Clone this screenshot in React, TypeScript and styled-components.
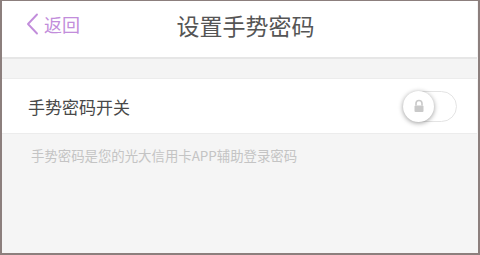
import React, { useState } from 'react';
import styled, { createGlobalStyle } from 'styled-components';

const GlobalStyle = createGlobalStyle`
  html, body {
    margin: 0;
    padding: 0;
    background: #ffffff;
  }
  body {
    font-family: "Noto Sans CJK SC", "Noto Sans", sans-serif;
  }
`;

const Frame = styled.div`
  box-sizing: border-box;
  width: 480px;
  height: 255px;
  border: 2px solid #8c7f7d;
  border-top-width: 1px;
  display: flex;
  flex-direction: column;
  background: #f5f5f5;
  overflow: hidden;
`;

const Inner = styled.div`
  flex: 1;
  display: flex;
  flex-direction: column;
  margin-right: 1px;
  margin-bottom: 1px;
  background: #f5f5f5;
`;

const Header = styled.header`
  position: relative;
  height: 56px;
  display: flex;
  align-items: center;
  justify-content: center;
  padding-left: 12px;
  background: #ffffff;
  border-bottom: 2px solid #e6e6e6;
`;

const BackButton = styled.button`
  position: absolute;
  left: 23px;
  top: 10px;
  display: flex;
  align-items: center;
  gap: 5px;
  padding: 0;
  border: none;
  background: none;
  color: #c28ddb;
  font-family: inherit;
  font-size: 18px;
  cursor: pointer;
`;

const Title = styled.h1`
  margin: 0 0 8px 0;
  font-size: 23px;
  font-weight: 400;
  color: #555555;
`;

const Spacer = styled.div`
  height: 19px;
  background: #f4f4f4;
  border-bottom: 1px solid #ececec;
`;

const Row = styled.div`
  height: 54px;
  display: flex;
  align-items: center;
  justify-content: space-between;
  padding: 0 20px 0 26px;
  background: #ffffff;
  border-bottom: 1px solid #ececec;
`;

const RowLabel = styled.span`
  font-size: 17px;
  color: #484848;
`;

const Toggle = styled.button<{ $on: boolean }>`
  position: relative;
  width: 54px;
  height: 31px;
  padding: 0;
  border-radius: 16px;
  border: 1px solid #e4e4e4;
  background: ${p => (p.$on ? '#c28ddb' : '#ffffff')};
  cursor: pointer;
`;

const Knob = styled.span<{ $on: boolean }>`
  position: absolute;
  top: -1px;
  left: ${p => (p.$on ? '23px' : '-1px')};
  width: 31px;
  height: 31px;
  border-radius: 50%;
  background: #ffffff;
  box-shadow: 0 1px 5px rgba(0, 0, 0, 0.4);
  display: flex;
  align-items: center;
  justify-content: center;
`;

const Hint = styled.p`
  margin: 0;
  padding: 11px 0 0 29px;
  font-size: 13.4px;
  color: #c4c4c4;
`;

const Chevron = () => (
  <svg width="14" height="22" viewBox="0 0 14 22">
    <path d="M12 1.5 L3 11 L12 20.5" fill="none" stroke="#c28ddb" strokeWidth="1.9" strokeLinecap="round" strokeLinejoin="round" />
  </svg>
);

const Lock = () => (
  <svg width="12" height="14" viewBox="0 0 12 14">
    <path d="M3 6.5 V4.5 a3 3 0 0 1 6 0 V6.5" fill="none" stroke="#c9c9c9" strokeWidth="1.6" />
    <rect x="1.5" y="6.5" width="9" height="6.5" rx="1" fill="#c9c9c9" />
  </svg>
);

export default function App() {
  const [on, setOn] = useState(false);
  return (
    <>
      <GlobalStyle />
      <Frame>
        <Inner>
          <Header>
            <BackButton>
              <Chevron />
              <span>返回</span>
            </BackButton>
            <Title>设置手势密码</Title>
          </Header>
          <Spacer />
          <Row>
            <RowLabel>手势密码开关</RowLabel>
            <Toggle $on={on} onClick={() => setOn(!on)}>
              <Knob $on={on}>
                <Lock />
              </Knob>
            </Toggle>
          </Row>
          <Hint>手势密码是您的光大信用卡APP辅助登录密码</Hint>
        </Inner>
      </Frame>
    </>
  );
}
